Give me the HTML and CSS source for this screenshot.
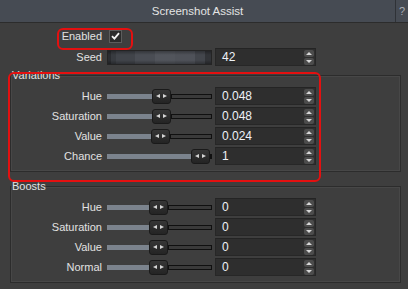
FILE: index.html
```html
<!doctype html>
<html lang="en">
    <head>
        <link rel="stylesheet" href="styles.css">
    </head>
    <body>
        <div class="window">
            <header class="titlebar">
                <div class="title">Screenshot Assist</div>
                <div class="help">?</div>
            </header>

            <div class="content">
                <div class="row row-enabled">
                    <span class="label">Enabled</span>
                    <span class="checkbox">
                        <svg width="9" height="8" viewBox="0 0 9 8"><path d="M1 4.2 L3.4 6.6 L8 1.2" fill="none" stroke="#f2f2f2" stroke-width="1.8"/></svg>
                    </span>
                </div>

                <div class="row row-seed">
                    <span class="label">Seed</span>
                    <div class="seed-bar"></div>
                    <div class="spin">
                        <span class="spin-value">42</span>
                        <span class="spin-buttons"><span class="spin-up"></span><span class="spin-down"></span></span>
                    </div>
                </div>

                <fieldset class="group">
                    <legend>Variations</legend>
                    <div class="row">
                        <span class="label">Hue</span>
                        <div class="slider"><span class="fill" style="width:45px"></span><span class="handle"></span><span class="rest"></span></div>
                        <div class="spin"><span class="spin-value">0.048</span><span class="spin-buttons"><span class="spin-up"></span><span class="spin-down"></span></span></div>
                    </div>
                    <div class="row">
                        <span class="label">Saturation</span>
                        <div class="slider"><span class="fill" style="width:45px"></span><span class="handle"></span><span class="rest"></span></div>
                        <div class="spin"><span class="spin-value">0.048</span><span class="spin-buttons"><span class="spin-up"></span><span class="spin-down"></span></span></div>
                    </div>
                    <div class="row">
                        <span class="label">Value</span>
                        <div class="slider"><span class="fill" style="width:44px"></span><span class="handle"></span><span class="rest"></span></div>
                        <div class="spin"><span class="spin-value">0.024</span><span class="spin-buttons"><span class="spin-up"></span><span class="spin-down"></span></span></div>
                    </div>
                    <div class="row">
                        <span class="label">Chance</span>
                        <div class="slider"><span class="fill" style="width:85px"></span><span class="handle"></span><span class="rest"></span></div>
                        <div class="spin"><span class="spin-value">1</span><span class="spin-buttons"><span class="spin-up"></span><span class="spin-down"></span></span></div>
                    </div>
                </fieldset>

                <fieldset class="group boosts">
                    <legend>Boosts</legend>
                    <div class="row">
                        <span class="label">Hue</span>
                        <div class="slider"><span class="fill" style="width:42px"></span><span class="handle"></span><span class="rest"></span></div>
                        <div class="spin"><span class="spin-value">0</span><span class="spin-buttons"><span class="spin-up"></span><span class="spin-down"></span></span></div>
                    </div>
                    <div class="row">
                        <span class="label">Saturation</span>
                        <div class="slider"><span class="fill" style="width:42px"></span><span class="handle"></span><span class="rest"></span></div>
                        <div class="spin"><span class="spin-value">0</span><span class="spin-buttons"><span class="spin-up"></span><span class="spin-down"></span></span></div>
                    </div>
                    <div class="row">
                        <span class="label">Value</span>
                        <div class="slider"><span class="fill" style="width:42px"></span><span class="handle"></span><span class="rest"></span></div>
                        <div class="spin"><span class="spin-value">0</span><span class="spin-buttons"><span class="spin-up"></span><span class="spin-down"></span></span></div>
                    </div>
                    <div class="row">
                        <span class="label">Normal</span>
                        <div class="slider"><span class="fill" style="width:42px"></span><span class="handle"></span><span class="rest"></span></div>
                        <div class="spin"><span class="spin-value">0</span><span class="spin-buttons"><span class="spin-up"></span><span class="spin-down"></span></span></div>
                    </div>
                </fieldset>

                <!-- annotation outlines drawn over the panel -->
                <div class="mark mark-enabled"></div>
                <div class="mark mark-variations"></div>
            </div>
        </div>
    </body>
</html>
```

FILE: styles.css
```css
html, body {
    margin: 0;
    background: #3e3e3e;
}
body {
    font-family: 'Liberation Sans', Arial, sans-serif;
    font-size: 11px;
    color: #e2e2e2;
}
.window {
    width: 408px;
    height: 289px;
    overflow: hidden;
}

.titlebar {
    display: flex;
    height: 22px;
    background: #464b53;
    border-bottom: 1px solid #2c2c2c;
}
.title {
    flex: 1;
    text-align: center;
    line-height: 22px;
    color: #e4e4e4;
    font-size: 11.5px;
}
.help {
    width: 12px;
    border-left: 1px solid #2f3237;
    text-align: center;
    line-height: 22px;
    color: #a9adb5;
}

.content {
    position: relative;
}

.row {
    display: flex;
    align-items: center;
    height: 18px;
    margin-bottom: 2px;
}
.label {
    width: 91px;
    margin-right: 5px;
    text-align: right;
    white-space: nowrap;
}
.row-enabled {
    margin-top: 4px;
    margin-bottom: 3px;
}
.row-enabled .label,
.row-seed .label {
    width: 102px;
}
.row-enabled .label {
    margin-right: 7px;
}

.checkbox {
    display: flex;
    align-items: center;
    justify-content: center;
    box-sizing: border-box;
    width: 13px;
    height: 13px;
    background: #2b2b2b;
    border: 1px solid #5c5c5c;
}

.seed-bar {
    box-sizing: border-box;
    width: 105px;
    height: 15px;
    margin-right: 3px;
    border: 1px solid #242424;
    background:
        linear-gradient(to bottom, rgba(0,0,0,.3), rgba(0,0,0,0) 30%, rgba(0,0,0,0) 70%, rgba(0,0,0,.3)),
        linear-gradient(to right, #2b2d31 0 3px, #383b40 3px 8px, #41444a 8px 27px, #4a4d54 27px 47px, #52555c 47px 67px, #4f5259 67px 87px, #43464c 87px 97px, #323438 97px);
}

.spin {
    display: flex;
    align-items: center;
    box-sizing: border-box;
    width: 101px;
    height: 18px;
    background: #2e2e2e;
    border: 1px solid #272727;
    border-top-color: #242424;
}
.spin-value {
    flex: 1;
    padding-left: 6px;
    color: #eef2f8;
    font-size: 12px;
}
.spin-buttons {
    display: flex;
    flex-direction: column;
    gap: 1px;
    margin-right: 1px;
}
.spin-up,
.spin-down {
    position: relative;
    width: 10px;
    height: 7px;
    background: #4c4c4c;
    border-radius: 2px;
}
.spin-up::after,
.spin-down::after {
    content: '';
    position: absolute;
    left: 2px;
    top: 2px;
    border-left: 3px solid transparent;
    border-right: 3px solid transparent;
}
.spin-up::after {
    border-bottom: 3px solid #d6d6d6;
}
.spin-down::after {
    border-top: 3px solid #d6d6d6;
}

.slider {
    display: flex;
    align-items: center;
    width: 105px;
    height: 18px;
    margin-right: 3px;
}
.fill {
    height: 5px;
    background: #7b838d;
}
.handle {
    position: relative;
    box-sizing: border-box;
    width: 19px;
    height: 15px;
    background: linear-gradient(#363636, #242424);
    border: 1px solid #1a1a1a;
    border-radius: 3px;
}
.handle::before {
    content: '';
    position: absolute;
    left: 3px;
    top: 4px;
    border-top: 2.5px solid transparent;
    border-bottom: 2.5px solid transparent;
    border-right: 4px solid #d4d4d4;
    box-shadow: 5px 0 0 -4px #6a6a6a;
}
.handle::after {
    content: '';
    position: absolute;
    left: 10px;
    top: 4px;
    border-top: 2.5px solid transparent;
    border-bottom: 2.5px solid transparent;
    border-left: 4px solid #d4d4d4;
}
.rest {
    flex: 1;
    box-sizing: border-box;
    height: 5px;
    border: 1px solid #101010;
    background: #3a3a3a;
}

.group {
    margin: 0 7px 0 10px;
    padding: 5px 0 4px 0;
    border: 1px solid #2c2c2c;
    box-shadow: inset 0 0 0 1px #474747;
    min-width: 0;
}
.group legend {
    padding: 0 0 0 1px;
    line-height: 14px;
    color: #e2e2e2;
}
.boosts {
    margin-top: 7px;
}

.mark {
    position: absolute;
    box-sizing: border-box;
    border: 2px solid #e41010;
    border-radius: 6px;
}
.mark-enabled {
    left: 57px;
    top: 1px;
    width: 76px;
    height: 22px;
}
.mark-variations {
    left: 8px;
    top: 45px;
    width: 313px;
    height: 110px;
}
```
